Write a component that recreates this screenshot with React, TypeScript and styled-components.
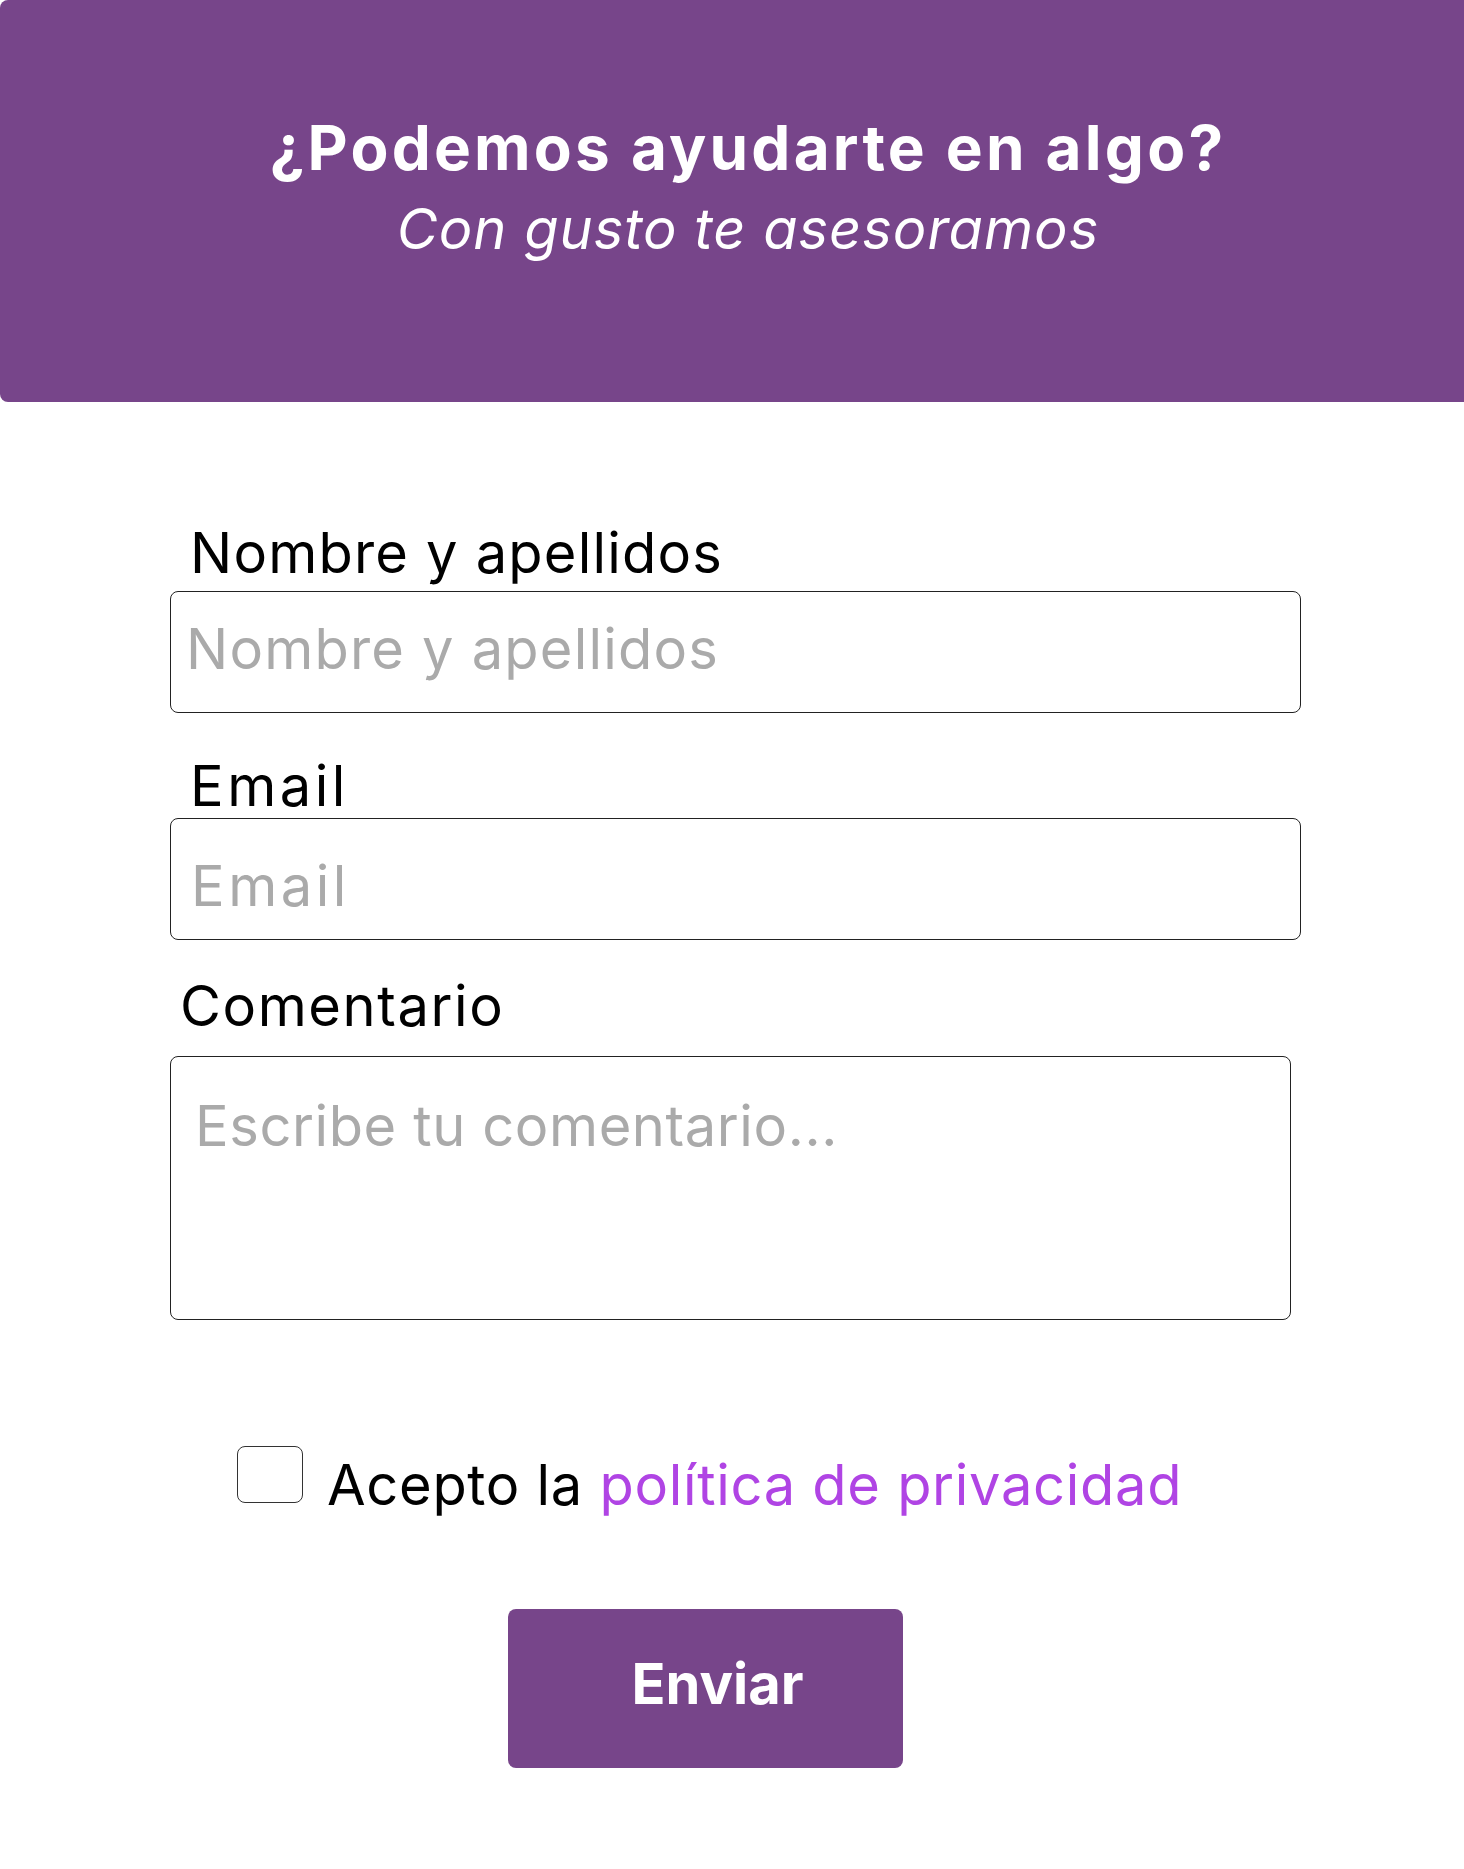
import React from "react";
import styled, { createGlobalStyle } from "styled-components";

const GlobalStyle = createGlobalStyle`
  html, body {
    margin: 0;
    padding: 0;
    background: #ffffff;
  }
  body {
    font-family: Inter, Roboto, "Liberation Sans", sans-serif;
    color: #000;
  }
`;

const purple = "#77458a";
const font = `Inter, Roboto, "Liberation Sans", sans-serif`;

const Page = styled.div`
  width: 1464px;
  min-height: 1869px;
  background: #fff;
`;

const Hero = styled.header`
  height: 402px;
  box-sizing: border-box;
  padding: 111px 0 0 32px;
  background: ${purple};
  border-radius: 8px 0 0 8px;
  display: flex;
  flex-direction: column;
  align-items: center;
  color: #fff;
`;

const Title = styled.h1`
  margin: 0;
  font-size: 62px;
  line-height: 74px;
  font-weight: 700;
  letter-spacing: 3.2px;
`;

const Subtitle = styled.p`
  margin: 10px 0 0;
  font-size: 56px;
  line-height: 68px;
  font-style: italic;
  font-weight: 400;
  letter-spacing: 1px;
`;

const Form = styled.form`
  display: flex;
  flex-direction: column;
  padding: 117px 163px 0 170px;
`;

const Field = styled.div<{ $top?: number }>`
  display: flex;
  flex-direction: column;
  margin-top: ${(p) => p.$top ?? 0}px;
`;

const Label = styled.label<{ $indent: number; $gap: number; $track?: number }>`
  font-size: 56px;
  line-height: 68px;
  letter-spacing: ${(p) => p.$track ?? 1.2}px;
  padding-left: ${(p) => p.$indent}px;
  margin-bottom: ${(p) => p.$gap}px;
`;

const fieldText = `
  font-family: ${font};
  font-size: 56px;
  color: #000;
  box-sizing: border-box;
  border: 1px solid #222;
  border-radius: 8px;
  background: #fff;
  outline: none;
  &::placeholder {
    color: #aaaaaa;
    opacity: 1;
  }
`;

const TextInput = styled.input<{ $pad: number; $track: number; $shift: number }>`
  ${fieldText}
  height: 122px;
  width: 100%;
  padding: ${(p) => Math.max(p.$shift, 0)}px 0 ${(p) => Math.max(-p.$shift, 0)}px ${(p) => p.$pad}px;
  letter-spacing: ${(p) => p.$track}px;
`;

const Comment = styled.textarea`
  ${fieldText}
  width: 1121px;
  height: 264px;
  padding: 36px 24px;
  line-height: 67px;
  letter-spacing: 0.6px;
  resize: none;
`;

const Consent = styled.div`
  display: flex;
  align-items: center;
  gap: 24px;
  margin: 131px 0 0 67px;
  font-size: 56px;
  line-height: 68px;
  letter-spacing: 0.7px;
`;

const Box = styled.span`
  flex: none;
  width: 66px;
  height: 57px;
  box-sizing: border-box;
  border: 1px solid #333;
  border-radius: 8px;
  margin-top: -22px;
`;

const Link = styled.a`
  color: #b044e4;
  text-decoration: none;
`;

const Send = styled.button`
  align-self: flex-start;
  margin: 90px 0 0 338px;
  width: 395px;
  height: 159px;
  padding: 0 0 10px 24px;
  border: none;
  border-radius: 8px;
  background: ${purple};
  color: #fff;
  font-family: ${font};
  font-size: 56px;
  font-weight: 700;
  cursor: pointer;
`;

export default function App() {
  return (
    <Page>
      <GlobalStyle />
      <Hero>
        <Title>¿Podemos ayudarte en algo?</Title>
        <Subtitle>Con gusto te asesoramos</Subtitle>
      </Hero>
      <Form onSubmit={(e) => e.preventDefault()}>
        <Field>
          <Label $indent={20} $gap={4}>Nombre y apellidos</Label>
          <TextInput $pad={15} $track={1.2} $shift={-6} placeholder="Nombre y apellidos" />
        </Field>
        <Field $top={39}>
          <Label $indent={20} $gap={-2} $track={3.5}>Email</Label>
          <TextInput $pad={20} $track={3.5} $shift={14} placeholder="Email" />
        </Field>
        <Field $top={32}>
          <Label $indent={10} $gap={16} $track={1.6}>Comentario</Label>
          <Comment placeholder="Escribe tu comentario..." />
        </Field>
        <Consent>
          <Box />
          <span>
            Acepto la <Link href="#">política de privacidad</Link>
          </span>
        </Consent>
        <Send type="submit">Enviar</Send>
      </Form>
    </Page>
  );
}
